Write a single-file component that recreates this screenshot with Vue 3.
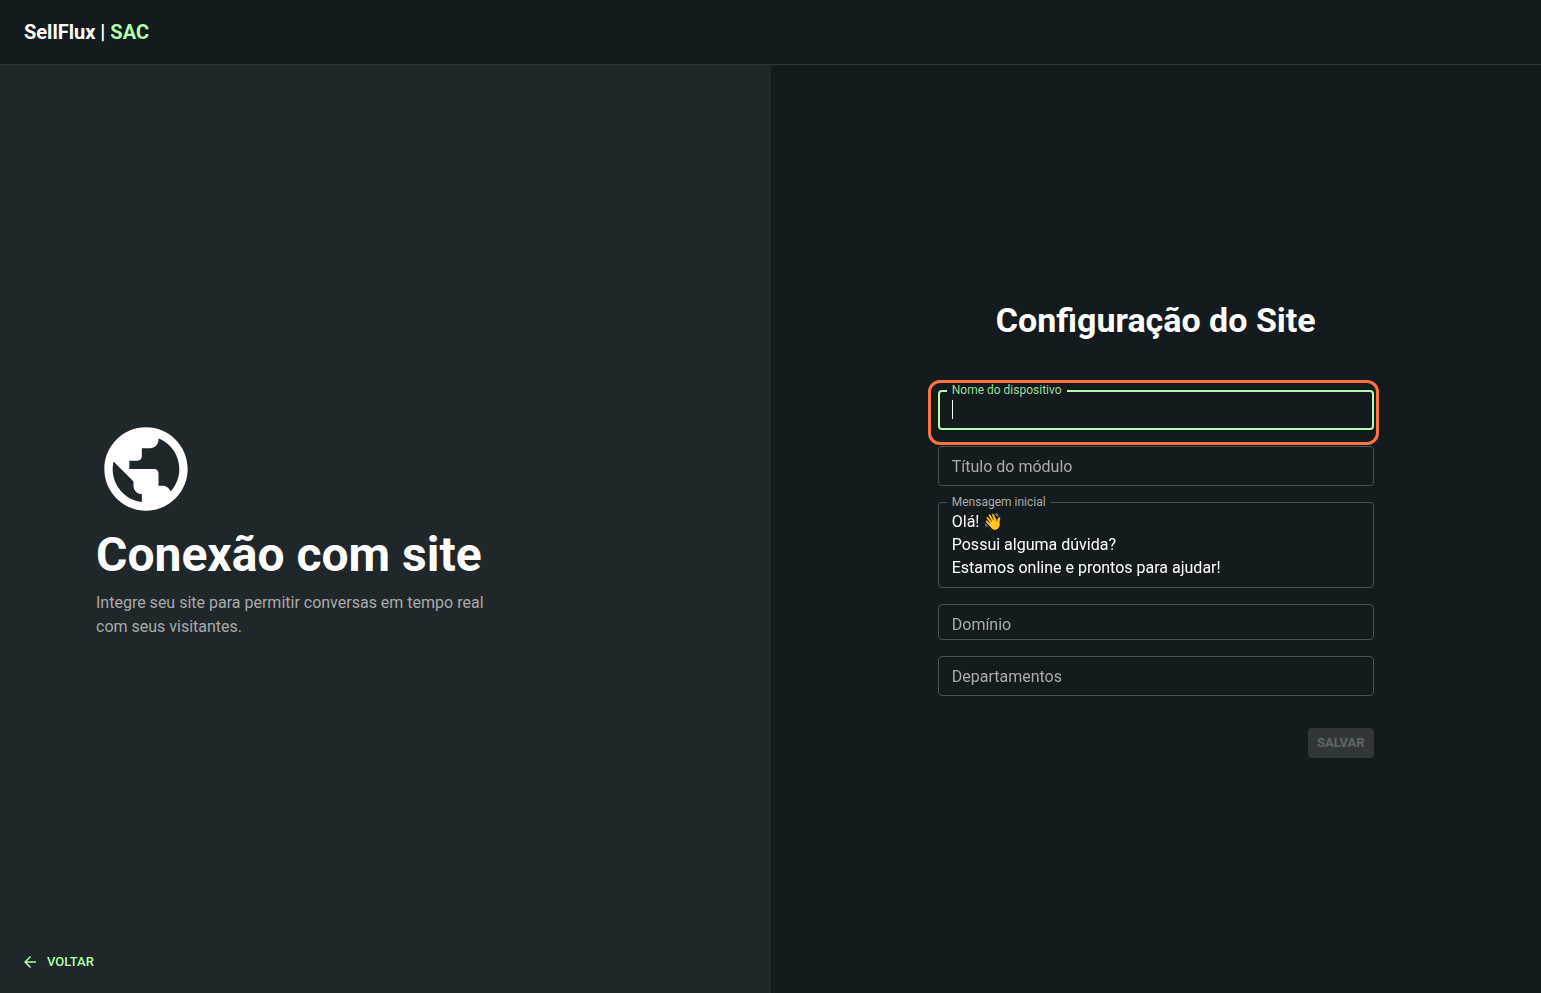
<template>
  <div class="page">
    <header class="topbar">
      <div class="brand">SellFlux | <span class="brand-accent">SAC</span></div>
    </header>

    <main class="content">
      <section class="intro-panel">
        <div class="intro">
          <svg class="globe" viewBox="0 0 24 24" aria-hidden="true">
            <path d="M12 2C6.48 2 2 6.48 2 12s4.48 10 10 10 10-4.48 10-10S17.52 2 12 2zm-1 17.93c-3.95-.49-7-3.85-7-7.93 0-.62.08-1.21.21-1.79L9 15v1c0 1.1.9 2 2 2v1.93zm6.9-2.54c-.26-.81-1-1.39-1.9-1.39h-1v-3c0-.55-.45-1-1-1H8v-2h2c.55 0 1-.45 1-1V7h2c1.1 0 2-.9 2-2v-.41c2.93 1.19 5 4.06 5 7.41 0 2.08-.8 3.97-2.1 5.39z" />
          </svg>
          <h1>Conexão com site</h1>
          <p>Integre seu site para permitir conversas em tempo real com seus visitantes.</p>
        </div>
        <button type="button" class="back-btn">
          <svg class="back-icon" viewBox="0 0 24 24" aria-hidden="true">
            <path d="M20 11H7.83l5.59-5.59L12 4l-8 8 8 8 1.41-1.41L7.83 13H20v-2z" />
          </svg>
          Voltar
        </button>
      </section>

      <section class="form-panel">
        <form class="form" @submit.prevent>
          <h2>Configuração do Site</h2>

          <div class="field active">
            <input id="deviceName" ref="deviceInput" v-model="form.deviceName" type="text" autocomplete="off">
            <label for="deviceName" class="floating">Nome do dispositivo</label>
            <span v-if="!form.deviceName" class="caret"></span>
            <span class="highlight"></span>
          </div>

          <div class="field">
            <input id="moduleTitle" v-model="form.moduleTitle" type="text">
            <label for="moduleTitle" :class="{ floating: form.moduleTitle }">Título do módulo</label>
          </div>

          <div class="field">
            <textarea id="message" v-model="form.message" rows="3"></textarea>
            <label for="message" :class="{ floating: form.message }">Mensagem inicial</label>
          </div>

          <div class="field compact">
            <input id="domain" v-model="form.domain" type="text">
            <label for="domain" :class="{ floating: form.domain }">Domínio</label>
          </div>

          <div class="field">
            <input id="departments" v-model="form.departments" type="text">
            <label for="departments" :class="{ floating: form.departments }">Departamentos</label>
          </div>

          <button type="submit" class="save-btn" :disabled="!canSave">Salvar</button>
        </form>
      </section>
    </main>
  </div>
</template>

<script setup>
import { ref, reactive, computed, onMounted } from 'vue'

const deviceInput = ref(null)

const form = reactive({
  deviceName: '',
  moduleTitle: '',
  message: 'Olá! 👋\nPossui alguma dúvida?\nEstamos online e prontos para ajudar!',
  domain: '',
  departments: ''
})

const canSave = computed(() => {
  return Boolean(form.deviceName && form.moduleTitle && form.domain && form.departments)
})

onMounted(() => {
  deviceInput.value.focus()
})
</script>

<style>
body {
  margin: 0;
  background: #141b1e;
}
</style>

<style scoped>
.page {
  display: flex;
  flex-direction: column;
  min-height: 100vh;
  background: #141b1e;
  color: #fff;
  font-family: Roboto, "Liberation Sans", sans-serif;
  font-size: 16px;
  line-height: 24px;
}
.page *,
.page {
  box-sizing: border-box;
}
.topbar {
  display: flex;
  align-items: center;
  height: 65px;
  padding: 0 24px;
  border-bottom: 1px solid #2f3638;
}
.brand {
  font-size: 20px;
  font-weight: 700;
}
.brand-accent {
  color: #b1ffac;
}
.content {
  flex: 1;
  display: grid;
  grid-template-columns: 1fr 1fr;
}
.intro-panel {
  display: grid;
  grid-template-rows: 1fr auto 1fr;
  padding: 0 16px;
  background: #20272a;
}
.intro {
  grid-row: 2;
  padding: 0 80px;
}
.globe {
  display: block;
  width: 100px;
  height: 100px;
  fill: #fff;
}
h1 {
  margin: 8px 0;
  font-size: 48px;
  font-weight: 700;
  line-height: 56px;
}
.intro p {
  max-width: 400px;
  margin: 0;
  color: #a9abab;
}
.back-btn {
  grid-row: 3;
  place-self: end start;
  display: flex;
  align-items: center;
  gap: 8px;
  margin-bottom: 16px;
  padding: 4px 5px;
  border: none;
  background: none;
  color: #b1ffac;
  font-family: inherit;
  font-size: 13px;
  font-weight: 500;
  line-height: 22px;
  text-transform: uppercase;
  cursor: pointer;
}
.back-icon {
  width: 18px;
  height: 18px;
  fill: currentColor;
}
.form-panel {
  display: flex;
  align-items: center;
  justify-content: center;
}
.form {
  display: flex;
  flex-direction: column;
  gap: 16px;
  width: 100%;
  max-width: 436px;
}
h2 {
  margin: 0 0 34px;
  font-size: 34px;
  font-weight: 700;
  line-height: 40px;
  text-align: center;
}
.field {
  position: relative;
  display: flex;
}
.field input,
.field textarea {
  width: 100%;
  height: 40px;
  margin: 0;
  padding: 0 13px;
  border: 1px solid #4b5052;
  border-radius: 4px;
  outline: none;
  background: transparent;
  color: #fff;
  font-family: inherit;
  font-size: 16px;
  line-height: 23px;
}
.field textarea {
  height: auto;
  padding: 7px 13px 8px;
  resize: none;
  overflow: hidden;
}
.field.compact input {
  height: 36px;
}
.field label {
  position: absolute;
  top: 9px;
  left: 14px;
  color: #a9abab;
  pointer-events: none;
}
.field label.floating {
  top: -8px;
  left: 9px;
  padding: 0 5px;
  background: #141b1e;
  font-size: 12px;
  line-height: 16px;
}
.field.active input {
  border: 2px solid #b1ffac;
  caret-color: transparent;
}
.field.active label {
  color: #9bdd98;
}
.caret {
  position: absolute;
  top: 10px;
  left: 14px;
  width: 1px;
  height: 19px;
  background: #fff;
}
/* Outline that points the user to the current step */
.highlight {
  position: absolute;
  inset: -10px -5px -15px -10px;
  border: 3px solid #ff7340;
  border-radius: 12px;
  pointer-events: none;
}
.save-btn {
  align-self: flex-end;
  min-width: 66px;
  margin-top: 16px;
  padding: 4px 8px;
  border: none;
  border-radius: 4px;
  background: #b1ffac;
  color: #141b1e;
  font-family: inherit;
  font-size: 13px;
  font-weight: 700;
  line-height: 22px;
  text-transform: uppercase;
  cursor: pointer;
}
.save-btn:disabled {
  background: #303639;
  color: #5f6567;
  cursor: default;
}
@media (max-width: 900px) {
  .content {
    grid-template-columns: 1fr;
  }
  .intro {
    padding: 32px 16px;
  }
  .form-panel {
    padding: 32px 24px;
  }
}
</style>
